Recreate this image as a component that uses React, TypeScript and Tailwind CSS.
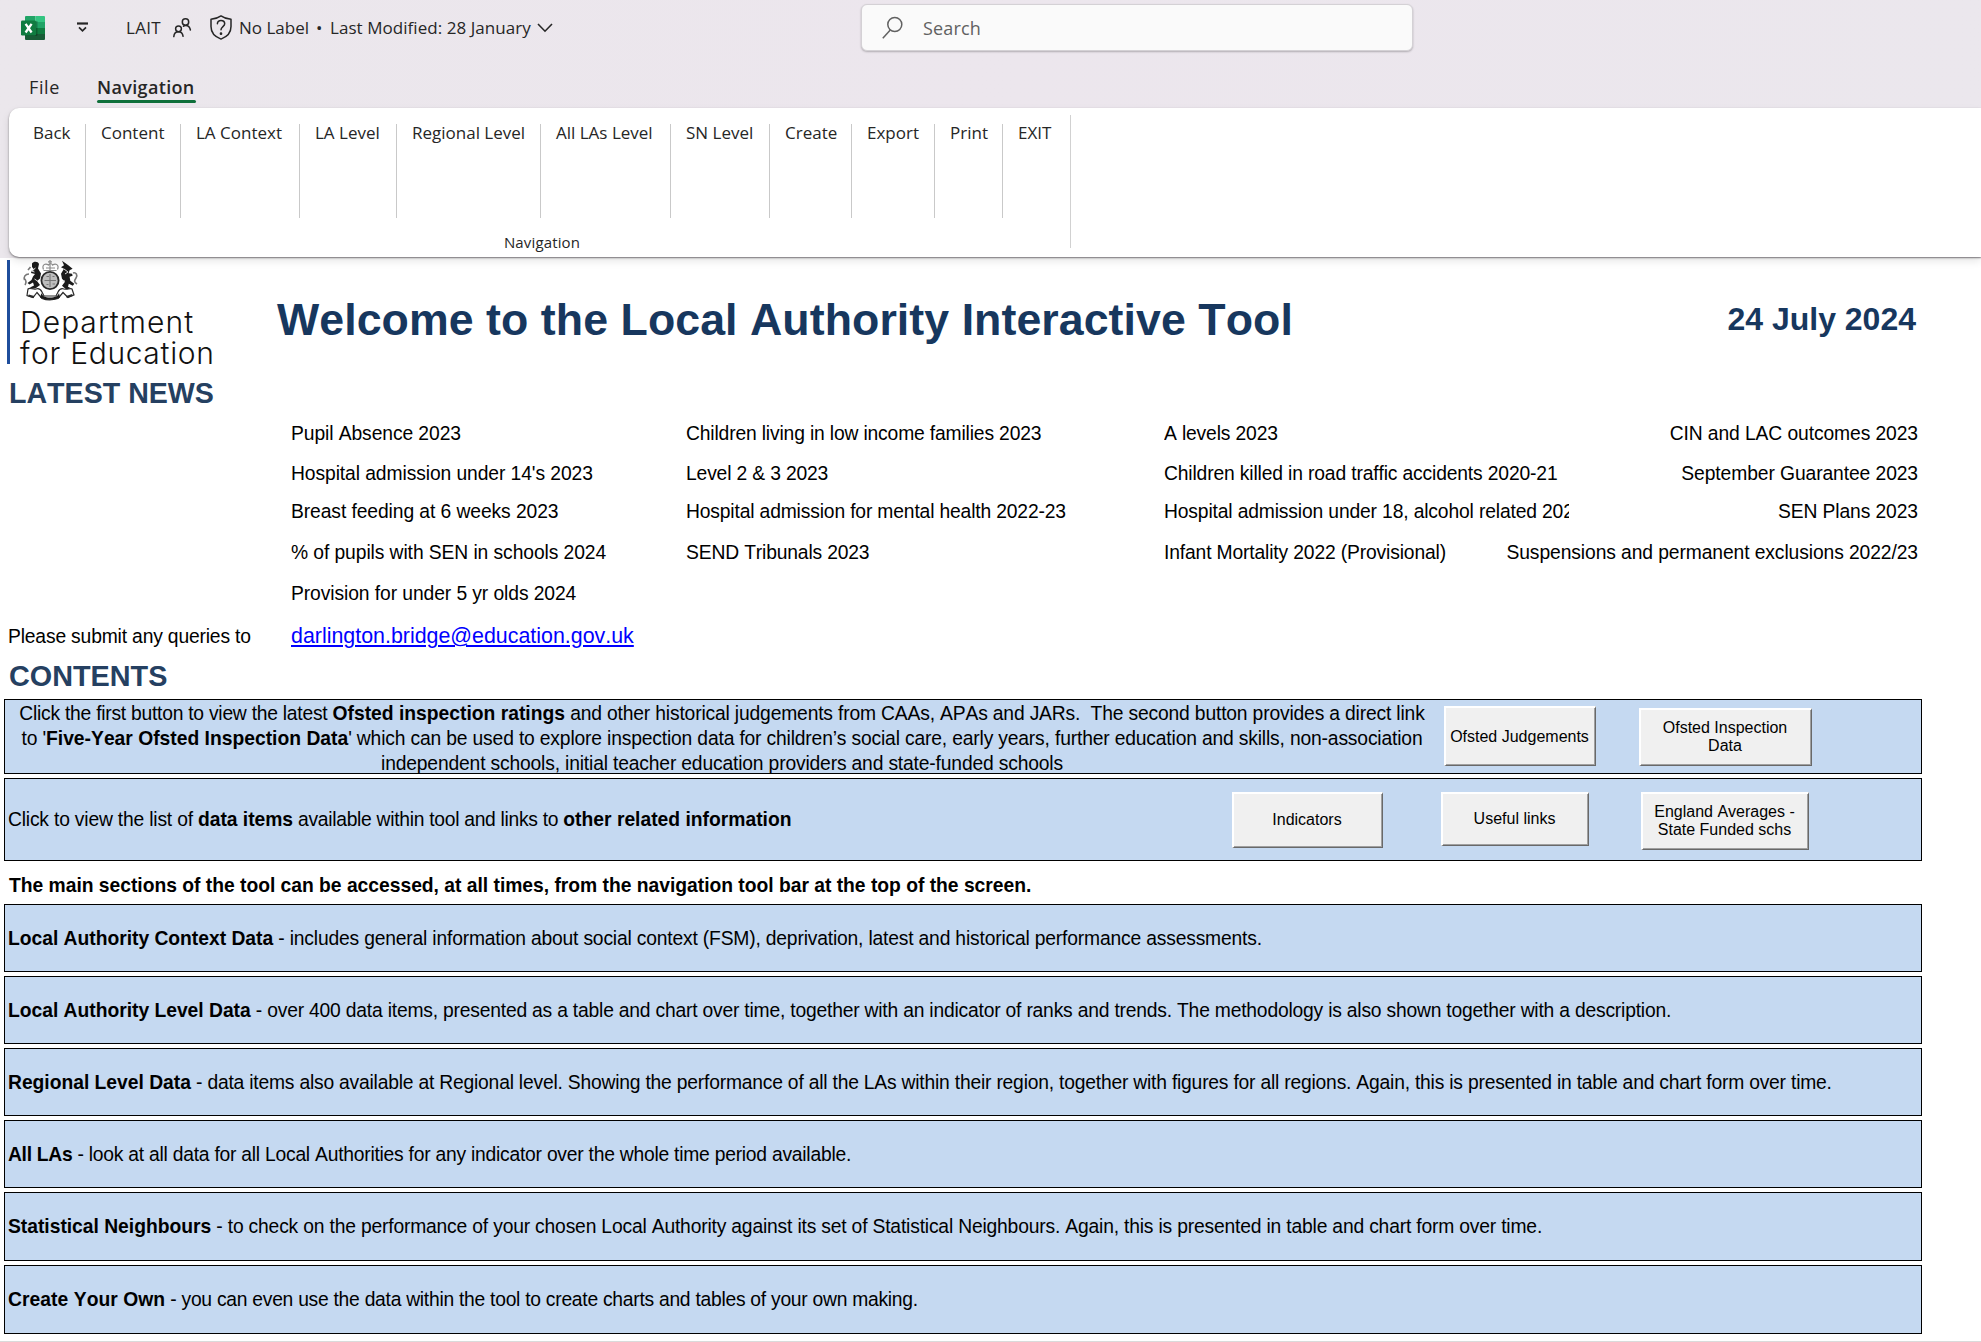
import type { ReactNode } from "react";

const ribbonItems = [
  { label: "Back", width: "w-[77px]" },
  { label: "Content", width: "w-[95px]" },
  { label: "LA Context", width: "w-[119px]" },
  { label: "LA Level", width: "w-[97px]" },
  { label: "Regional Level", width: "w-[144px]" },
  { label: "All LAs Level", width: "w-[130px]" },
  { label: "SN Level", width: "w-[99px]" },
  { label: "Create", width: "w-[82px]" },
  { label: "Export", width: "w-[83px]" },
  { label: "Print", width: "w-[68px]" },
  { label: "EXIT", width: "w-[67px]" },
];

const news = [
  { height: "h-[41px]", cells: ["Pupil Absence 2023", "Children living in low income families 2023", "A levels 2023", "CIN and LAC outcomes 2023"] },
  { height: "h-[39px]", cells: ["Hospital admission under 14's 2023", "Level 2 & 3 2023", "Children killed in road traffic accidents 2020-21", "September Guarantee 2023"] },
  { height: "h-[37px]", cells: ["Breast feeding at 6 weeks 2023", "Hospital admission for mental health 2022-23", "Hospital admission under 18, alcohol related 2022-23", "SEN Plans 2023"] },
  { height: "h-[45px]", cells: ["% of pupils with SEN in schools 2024", "SEND Tribunals 2023", "Infant Mortality 2022 (Provisional)", "Suspensions and permanent exclusions 2022/23"] },
  { height: "h-[36px]", cells: ["Provision for under 5 yr olds 2024", "", "", ""] },
];

const sections = [
  { style: "h-[68px] tracking-[-0.184px]", title: "Local Authority Context Data", text: "includes general information about social context (FSM), deprivation, latest and historical performance assessments." },
  { style: "h-[68px] tracking-[-0.204px]", title: "Local Authority Level Data", text: "over 400 data items, presented as a table and chart over time, together with an indicator of ranks and trends. The methodology is also shown together with a description." },
  { style: "h-[68px] tracking-[-0.208px]", title: "Regional Level Data", text: "data items also available at Regional level. Showing the performance of all the LAs within their region, together with figures for all regions. Again, this is presented in table and chart form over time." },
  { style: "h-[68px] tracking-[-0.238px] [&>b]:tracking-[-0.300px]", title: "All LAs", text: "look at all data for all Local Authorities for any indicator over the whole time period available." },
  { style: "h-[69px] tracking-[-0.184px]", title: "Statistical Neighbours", text: "to check on the performance of your chosen Local Authority against its set of Statistical Neighbours. Again, this is presented in table and chart form over time." },
  { style: "h-[69px] tracking-[-0.265px] [&>b]:tracking-[0.050px]", title: "Create Your Own", text: "you can even use the data within the tool to create charts and tables of your own making." },
];

function ExcelIcon() {
  return (
    <svg width="24" height="24" viewBox="0 0 24 24" className="block">
      <path d="M5 0h9.500v6H4V1a1 1 0 0 1 1-1z" fill="#21a366" />
      <path d="M14.500 0H23a1 1 0 0 1 1 1v5h-9.500z" fill="#33c481" />
      <path d="M4 6h10.500v6H4z" fill="#107c41" />
      <path d="M14.500 6H24v6h-9.500z" fill="#21a366" />
      <path d="M4 12h10.500v6H4z" fill="#185c37" />
      <path d="M14.500 12H24v6h-9.500z" fill="#107c41" />
      <path d="M4 18h20v5a1 1 0 0 1-1 1H5a1 1 0 0 1-1-1z" fill="#185c37" />
      <path d="M13 5h3.500v14a1 1 0 0 1-1 1H4v-1h9z" fill="#000" opacity=".25" />
      <rect x="0" y="4.500" width="15" height="15" rx="1.200" fill="#107c41" />
      <path d="M4.600 7.800 10.600 16.500M10.600 7.800 4.600 16.500" stroke="#fff" strokeWidth="2.300" fill="none" />
    </svg>
  );
}

function PeopleIcon() {
  return (
    <svg width="20" height="20" viewBox="0 0 20 20" fill="none" stroke="#262626" strokeWidth="1.500" strokeLinecap="round" className="block">
      <circle cx="5.500" cy="10.800" r="2.900" />
      <path d="M.8 18.600c.3-2.900 2.200-4.800 4.700-4.800s4.200 1.700 4.600 4.500" />
      <circle cx="12.500" cy="4" r="3.200" />
      <path d="M10.500 8.200c.6-.5 1.300-.8 2.200-.8 2.400 0 4.200 1.700 4.700 4.600" />
    </svg>
  );
}

function ShieldIcon() {
  return (
    <svg width="22" height="25" viewBox="0 0 22 25" fill="none" stroke="#262626" strokeWidth="1.500" strokeLinecap="round" strokeLinejoin="round" className="block">
      <path d="M11 .9c2.800 2 6.200 3.100 10 3.400v7.300c0 6-3.600 10.200-10 12.500C4.600 21.800 1 17.600 1 11.600V4.300c3.800-.3 7.200-1.400 10-3.400z" />
      <path d="M7.400 8.800C7.400 6.700 9 5.400 11 5.400s3.700 1.300 3.700 3.300c0 2.800-3.700 3-3.700 6.100" />
      <circle cx="11" cy="18.700" r=".6" fill="#262626" />
    </svg>
  );
}

function Crest() {
  return (
    <svg width="58" height="42" viewBox="0 0 58 42" className="block">
      <g fill="none" stroke="#8a8a8a" strokeWidth="1.200">
        <path d="M21.500 10.500h13M21.500 9.500c-2-5 2-6.500 5-4.500 1-2 3-2 4 0 3-2 7-.5 5 4.500M28 0v10M26 1.800h4M24 8h9" />
      </g>
      <circle cx="28" cy="20.500" r="8.600" fill="#bdbdbd" stroke="#2a2a2a" strokeWidth="1.800" />
      <path d="M28 14v13M22.500 20.500h11.500M24.500 16.500h2.500M30.500 16.500h2M24.500 24.500h2M30.500 24h2.500" stroke="#777" strokeWidth="1.100" fill="none" />
      <path d="M10 3.500c1.500-2.500 6-2.500 7 .5l-1 4.500 3 5-1 5-3 2.500 3 4-4 3-4 1-2-1.500 4-2-1-3-3.500 2-2-1.500 4-3 1.500-3.500 2-2.500-4-1 .5-2 3-1-2.500-3z" fill="#1a1a1a" />
      <path d="M46 5 40 .8l2 4.500-3 2 3 1.500-3 5 1 5 3 3-3 4 4.500 4 4 .5 1.500-1.500-4-2 .8-3 4 2 1.500-2-4-3-.7-4 3-1-.5-2-3.500-.5 1-3 3-1.500z" fill="#1a1a1a" />
      <path d="M7 14c-4 0-5.500 3-4.500 6M2 18c2 2 3 4 1 7M51 13c3-1 5 2 3 5s-2 4 1 6M8.500 7 6 10" stroke="#777" strokeWidth="1.600" fill="none" />
      <path d="m13.500 8-4 3 3 1M42 9l4 3-3 2M12.500 19l3 2M42.500 20l-2 2" stroke="#ddd" strokeWidth="1" fill="none" />
      <path d="M6 29c2-2 5 1 8 0 3-1 5 1 6 3l2 4h12l2-4c1-2 3-4 6-3s6-1 8 0l2 6-6 2.500-5-5-5 6c-6 2-11 2-16 0l-5-6-4 5-6-2z" fill="#fff" stroke="#2a2a2a" strokeWidth="1.200" />
      <path d="M19.500 33c1 3 3 4.500 8.500 4.500s8-1.500 9-4.500l1 4.500c-5 3-15 3-20 0z" fill="#1a1a1a" />
      <path d="M6.500 35.500l5.500 1.500M44.500 37l6-2" stroke="#2a2a2a" strokeWidth="2" />
    </svg>
  );
}

function FormButton({ children, className }: { children: ReactNode; className: string }) {
  return (
    <button
      className={`flex shrink-0 items-center justify-center whitespace-nowrap border-t-2 border-l-2 border-t-white border-l-white bg-[#f0f0f0] pr-[2px] text-center text-[16px] leading-[18px] text-black shadow-[inset_-1px_-1px_0_#a0a0a0] border-r border-b border-r-[#696969] border-b-[#696969] ${className}`}
    >
      <span>{children}</span>
    </button>
  );
}

export default function App() {
  return (
    <div className="flex h-[1342px] w-[1981px] flex-col overflow-hidden border-b border-[#dadada] bg-white font-['Liberation_Sans',Arial,sans-serif] text-[19.300px] text-black [font-kerning:none]">
      <header className="h-[258px] shrink-0 bg-linear-to-r from-[#ebe7ec] via-[#ece6ed] to-[#ebe7ed] font-['Open_Sans','Noto_Sans',sans-serif] text-[#262626]">
        <div className="flex h-[55px] items-start">
          <div className="flex h-[55px] w-[861px] items-center pl-[21px] text-[17px] whitespace-nowrap">
            <ExcelIcon />
            <svg width="12" height="11" viewBox="0 0 12 11" fill="none" stroke="#262626" className="ml-8 block">
              <path d="M0 1.500h11" strokeWidth="2.200" />
              <path d="m2 5.300 3.500 3.500L9 5.300" strokeWidth="1.700" />
            </svg>
            <span className="ml-[37px] w-[47px] tracking-[0.300px]">LAIT</span>
            <PeopleIcon />
            <span className="ml-[17px] w-[29px]">
              <ShieldIcon />
            </span>
            <span className="w-[76px]">No Label</span>
            <span className="w-[15px] pl-px">•</span>
            <span className="w-[208px] tracking-[0.050px]">Last Modified: 28 January</span>
            <svg width="16" height="10" viewBox="0 0 16 10" fill="none" stroke="#262626" strokeWidth="1.600" className="-ml-px block">
              <path d="m1 1 7 7.200L15 1" />
            </svg>
          </div>
          <div className="mt-1 flex h-[47px] w-[552px] items-center rounded-md border border-[#d4d1d5] bg-[#fafafa] pl-5 text-[18px] text-[#616161] shadow-[0_1px_2px_rgba(0,0,0,0.25)]">
            <svg width="22" height="24" viewBox="0 0 22 24" fill="none" stroke="#616161" strokeWidth="1.500" className="block">
              <circle cx="12.800" cy="8.500" r="7" />
              <path d="M8.300 14 .8 22.300" />
            </svg>
            <span className="ml-[19px] pt-[2px] tracking-[0.150px]">Search</span>
          </div>
        </div>
        <nav className="flex h-[53px] items-start pl-[29px] pt-5 text-[18px] leading-[25px]">
          <span className="w-[68px] tracking-[0.600px]">File</span>
          <span className="flex w-[99px] flex-col font-semibold">
            <span className="h-[25px] whitespace-nowrap tracking-[0.350px]">Navigation</span>
            <span className="h-[3px] rounded-full bg-[#0f703b]" />
          </span>
        </nav>
        <div className="ml-[9px] flex h-[149px] rounded-l-[10px] bg-white shadow-[0_1px_2px_rgba(0,0,0,0.450),0_4px_8px_rgba(0,0,0,0.100)]">
          <div className="mt-[7px] flex h-[133px] w-[1062px] flex-col border-r border-[#d1d1d1]">
            <div className="mt-[9px] flex text-[17px] leading-[18px]">
              {ribbonItems.map((item, i) => (
                <div
                  key={item.label}
                  className={`h-[94px] shrink-0 whitespace-nowrap ${i === 0 ? "pl-6" : "pl-[15px]"} ${i === ribbonItems.length - 1 ? "" : "border-r border-[#c9c9c9]"} ${item.width}`}
                >
                  {item.label}
                </div>
              ))}
            </div>
            <div className="mt-[14px] pl-[5px] text-center text-[15px] leading-[20px] tracking-[0.150px]">Navigation</div>
          </div>
        </div>
      </header>

      <main className="flex flex-col">
        <div className="flex h-[114px] w-[1922px] items-start">
          <div className="ml-[7px] mt-[2px] flex h-[104px] w-[270px] border-l-[3px] border-[#1f4e9c]">
            <div className="ml-3 flex flex-col font-['Inter',sans-serif] text-[30px] leading-[31px] font-light text-[#111]">
              <div className="h-[47px] shrink-0">
                <Crest />
              </div>
              <span className="-ml-[2px] shrink-0 whitespace-nowrap tracking-[1.100px]">Department</span>
              <span className="-ml-[2px] shrink-0 whitespace-nowrap tracking-[0.700px]">for Education</span>
            </div>
          </div>
          <h1 className="mt-[35px] flex-1 whitespace-nowrap text-[44.700px] leading-[54px] font-bold tracking-[0.060px] text-[#17375e]">
            Welcome to the Local Authority Interactive Tool
          </h1>
          <span className="mt-[44px] mr-[6px] whitespace-nowrap text-[32px] leading-[34px] font-bold text-[#17375e]">24 July 2024</span>
        </div>
        <h2 className="h-[42px] pl-[9px] text-[28.600px] leading-[42px] font-bold text-[#254061]">LATEST NEWS</h2>
        {news.map((row) => (
          <div key={row.cells[0]} className={`flex items-center whitespace-nowrap pl-[291px] ${row.height}`}>
            <span className="w-[395px] tracking-[-0.090px]">{row.cells[0]}</span>
            <span className="w-[478px] tracking-[-0.160px]">{row.cells[1]}</span>
            <span className="w-[405px] overflow-hidden tracking-[-0.150px]">{row.cells[2]}</span>
            <span className="flex w-[349px] justify-end tracking-[-0.100px]">{row.cells[3]}</span>
          </div>
        ))}
        <div className="flex h-[50px] items-center whitespace-nowrap pl-2">
          <span className="w-[283px] tracking-[-0.170px]">Please submit any queries to</span>
          <a href="#" className="-mt-[2px] text-[21.400px] text-[#0000ff] underline decoration-2 underline-offset-2">darlington.bridge@education.gov.uk</a>
        </div>
        <h2 className="h-[37px] pl-[9px] text-[28.800px] leading-[28px] font-bold text-[#254061]">CONTENTS</h2>

        <div className="ml-1 flex w-[1918px] flex-col gap-1">
          <section className="flex h-[75px] border border-black bg-[#c5d9f1]">
            <p className="w-[1434px] pt-px text-center leading-[25px] tracking-[-0.170px] whitespace-nowrap [&>b]:tracking-normal">
              <span className="tracking-[-0.250px]">Click the first button to view the latest </span>
              <b>Ofsted inspection ratings</b> and other historical judgements from CAAs, APAs and JARs.&nbsp; The second button provides a direct link
              <br />
              to '<b>Five-Year Ofsted Inspection Data</b>' which can be used to explore inspection data for children’s social care, early years, further education and skills, non-association
              <br />
              independent schools, initial teacher education providers and state-funded schools
            </p>
            <FormButton className="ml-[5px] mt-[6px] h-[60px] w-[152px]">Ofsted Judgements</FormButton>
            <FormButton className="ml-[43px] mt-[8px] h-[58px] w-[173px] pb-[2px]">
              Ofsted Inspection
              <br />
              Data
            </FormButton>
          </section>
          <section className="flex h-[83px] border border-black bg-[#c5d9f1]">
            <p className="flex w-[1227px] items-center pt-[2px] pl-[3px] tracking-[-0.250px] whitespace-pre">
              <span className="tracking-[-0.190px]">Click to view the list of </span>
              <b className="tracking-[-0.050px]">data items</b>
              <span className="tracking-[-0.290px]"> available within tool and links to </span>
              <b className="tracking-normal">other related information</b>
            </p>
            <FormButton className="mt-[13px] h-[56px] w-[151px] pb-[2px]">Indicators</FormButton>
            <FormButton className="ml-[58px] mt-[13px] h-[54px] w-[148px] pb-[2px]">Useful links</FormButton>
            <FormButton className="ml-[52px] mt-[13px] h-[58px] w-[168px] pb-[2px]">
              England Averages -
              <br />
              State Funded schs
            </FormButton>
          </section>
        </div>
        <p className="h-[43px] pl-[9px] leading-[50px] font-bold tracking-[-0.017px]">
          The main sections of the tool can be accessed, at all times, from the navigation tool bar at the top of the screen.
        </p>
        <div className="ml-1 flex w-[1918px] flex-col gap-1">
          {sections.map((s) => (
            <section key={s.title} className={`flex items-center border border-black bg-[#c5d9f1] pt-[2px] pl-[3px] whitespace-pre ${s.style}`}>
              <b className="tracking-[-0.020px]">{s.title}</b> - {s.text}
            </section>
          ))}
        </div>
      </main>
    </div>
  );
}
